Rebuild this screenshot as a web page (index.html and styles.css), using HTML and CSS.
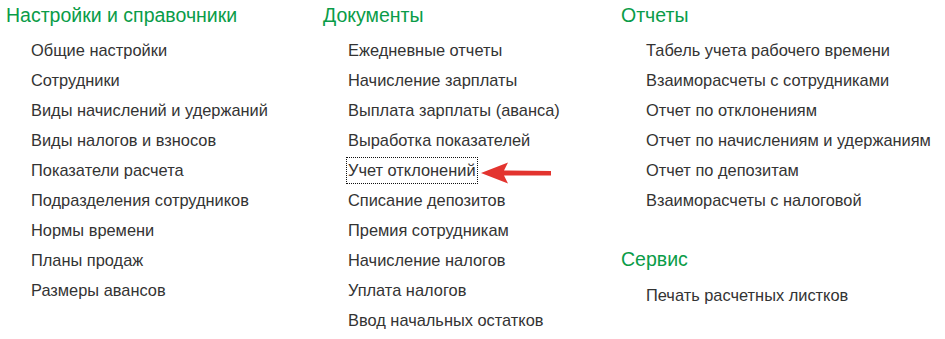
FILE: index.html
```html
<!DOCTYPE html>
<html lang="ru">
<head>
    <meta charset="UTF-8">
    <title>Зарплата</title>
    <link rel="stylesheet" href="styles.css">
</head>
<body>

    <div class="panel">
        <!-- Настройки -->
        <div class="column">
            <h2>Настройки и справочники</h2>
            <ul class="links">
                <li>Общие настройки</li>
                <li>Сотрудники</li>
                <li>Виды начислений и удержаний</li>
                <li>Виды налогов и взносов</li>
                <li>Показатели расчета</li>
                <li>Подразделения сотрудников</li>
                <li>Нормы времени</li>
                <li>Планы продаж</li>
                <li>Размеры авансов</li>
            </ul>
        </div>

        <!-- Документы -->
        <div class="column">
            <h2>Документы</h2>
            <ul class="links">
                <li>Ежедневные отчеты</li>
                <li>Начисление зарплаты</li>
                <li>Выплата зарплаты (аванса)</li>
                <li>Выработка показателей</li>
                <li><span class="focused">Учет отклонений<svg class="pointer" width="74" height="24" viewBox="0 0 74 24"><path d="M2 12 L29 1.5 L25 9.5 L72 10 L72 14.5 L25 14.5 L29 22.5 Z" fill="#e3342f"/></svg></span></li>
                <li>Списание депозитов</li>
                <li>Премия сотрудникам</li>
                <li>Начисление налогов</li>
                <li>Уплата налогов</li>
                <li>Ввод начальных остатков</li>
            </ul>
        </div>

        <!-- Отчеты и сервис -->
        <div class="column">
            <h2>Отчеты</h2>
            <ul class="links">
                <li>Табель учета рабочего времени</li>
                <li>Взаиморасчеты с сотрудниками</li>
                <li>Отчет по отклонениям</li>
                <li>Отчет по начислениям и удержаниям</li>
                <li>Отчет по депозитам</li>
                <li>Взаиморасчеты с налоговой</li>
            </ul>

            <h2 class="next">Сервис</h2>
            <ul class="links">
                <li>Печать расчетных листков</li>
            </ul>
        </div>
    </div>

</body>
</html>
```

FILE: styles.css
```css
/* Общее */
body {
    margin: 0;
    padding: 0 0 0 6px;
    background: #fff;
    font-family: 'Liberation Sans', Arial, sans-serif;
    color: #333;
}

.panel {
    display: grid;
    grid-template-columns: 317px 298px 1fr;
}

h2 {
    margin: 0 0 5px 0;
    font-size: 19.5px;
    font-weight: normal;
    line-height: 30px;
    color: #0a9c48;
}

h2.next {
    margin-top: 29px;
    margin-bottom: 6px;
}

.links {
    list-style: none;
    margin: 0;
    padding: 0 0 0 25px;
}

.links li {
    font-size: 16.4px;
    line-height: 30px;
    white-space: nowrap;
}

/* Выделенный пункт */
.focused {
    position: relative;
    margin-left: -2px;
    padding: 3px 1px 4px 1px;
    border: 1px dotted #111;
}

.pointer {
    position: absolute;
    left: calc(100% + 2px);
    top: 3px;
}
```
